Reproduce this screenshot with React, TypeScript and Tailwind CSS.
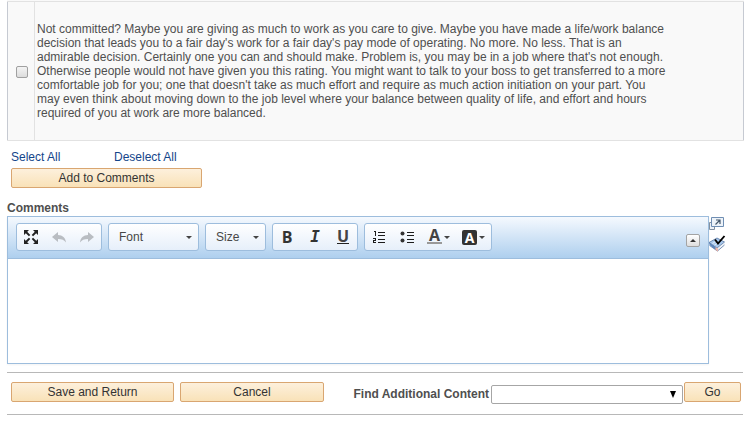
import type { ReactNode } from 'react';
import clsx from 'clsx';

const feedback = [
  'Not committed? Maybe you are giving as much to work as you care to give. Maybe you have made a life/work balance',
  "decision that leads you to a fair day's work for a fair day's pay mode of operating. No more. No less. That is an",
  "admirable decision. Certainly one you can and should make. Problem is, you may be in a job where that's not enough.",
  'Otherwise people would not have given you this rating. You might want to talk to your boss to get transferred to a more',
  "comfortable job for you; one that doesn't take as much effort and require as much action initiation on your part. You",
  'may even think about moving down to the job level where your balance between quality of life, and effort and hours',
  'required of you at work are more balanced.',
];

function ActionButton({ className, children }: { className?: string; children: ReactNode }) {
  return (
    <button
      type="button"
      className={clsx(
        'h-5 rounded-xs border border-[#d9a671] bg-linear-to-b from-[#fdf0dc] to-[#f9e2b8] text-center leading-[18px] text-[#333]',
        className,
      )}
    >
      {children}
    </button>
  );
}

function ToolGroup({ children }: { children: ReactNode }) {
  return (
    <div className="flex h-7 rounded-[3px] border border-[#9dbddd] bg-linear-to-b from-white to-[#e6effa]">
      {children}
    </div>
  );
}

function Tool({ label, wide, children }: { label: string; wide?: boolean; children: ReactNode }) {
  return (
    <button
      type="button"
      aria-label={label}
      className={clsx('flex items-center justify-center gap-0.5', wide ? 'w-[35px]' : 'w-7')}
    >
      {children}
    </button>
  );
}

function Caret() {
  return (
    <svg width="6" height="3" viewBox="0 0 6 3" fill="#444">
      <path d="M0 0h6L3 3z" />
    </svg>
  );
}

function Combo({ label, className }: { label: string; className: string }) {
  return (
    <div className={clsx('relative', className)}>
      <select
        aria-label={label}
        className="h-7 w-full appearance-none rounded-[3px] border border-[#9dbddd] bg-linear-to-b from-white to-[#e6effa] pl-2.5 text-[#474747]"
      >
        <option>{label}</option>
      </select>
      <span className="pointer-events-none absolute top-3 right-[7px] flex h-1 items-center">
        <Caret />
      </span>
    </div>
  );
}

function MaximizeIcon() {
  return (
    <svg width="14" height="14" viewBox="0 0 14 14" fill="#222" stroke="#222" strokeWidth="2">
      <path stroke="none" d="M0 0h5L0 5zM14 0v5L9 0zM0 14V9l5 5zM14 14H9l5-5z" />
      <path d="M2 2l3.600 3.600M12 2L8.400 5.600M2 12l3.600-3.600M12 12L8.400 8.400" />
    </svg>
  );
}

function UndoIcon({ flip }: { flip?: boolean }) {
  return (
    <svg width="14" height="11" viewBox="0 0 14 11" fill="#b9bdc2" className={flip ? '-scale-x-100' : undefined}>
      <path d="M0 5l6-5v3c4.500.200 7.500 2.800 8 7.500C12.300 8 9.800 7 6 7v3z" />
    </svg>
  );
}

function NumberedIcon() {
  return (
    <svg width="14" height="14" viewBox="0 0 14 14" fill="#1c1c1c" shapeRendering="crispEdges">
      <path d="M2 1h2v5H3V2H2z" />
      <path d="M1 8h3v3H2v1h2v1H1v-3h2V9H1z" />
      <path d="M6 2h7v1H6zM6 5h7v1H6zM6 9h7v1H6zM6 12h7v1H6z" />
    </svg>
  );
}

function BulletIcon() {
  return (
    <svg width="14" height="14" viewBox="0 0 14 14">
      <circle cx="2.500" cy="3.500" r="2" fill="#333" />
      <circle cx="2.500" cy="10.500" r="2" fill="#333" />
      <path fill="#1c1c1c" d="M7 2h7v1H7zM7 5h7v1H7zM7 9h7v1H7zM7 12h7v1H7z" />
    </svg>
  );
}

function PopupIcon() {
  return (
    <svg width="15" height="13" viewBox="0 0 15 13" fill="none">
      <path d="M.5 5.500h5v7h-5z" fill="#eef2f7" stroke="#8290a0" />
      <path d="M2.500.5h12v9h-12z" fill="#edf3f9" stroke="#6f8eb3" />
      <path d="M6.500 7.500l4-4M7 3h4v4" stroke="#46586b" strokeWidth="1.200" />
    </svg>
  );
}

function SpellCheckIcon() {
  return (
    <svg width="17" height="17" viewBox="0 0 17 17" fill="none">
      <path d="M0 7.500L8 3l7.500 4L8 13z" fill="#a9c8ec" />
      <path d="M0 7.500L8 13v3L.5 10z" fill="#5b86c0" />
      <path d="M8 13l7.500-6v3L8.500 16z" fill="#eef2f7" />
      <path d="M0 7.500L8 3l7.500 4L8 13zM.5 10.500L8.500 16l7-6" stroke="#5877a3" strokeWidth=".8" />
      <path d="M6.500 12l2.500 1.500v3l-2.500-1.500z" fill="#f0b5a8" />
      <path d="M3.500 8.500L8 5.500M5.500 10l3-2" stroke="#e6f0fb" />
      <path d="M6 4.500l3 4L15.500 1" stroke="#000" strokeWidth="1.900" />
    </svg>
  );
}

function Toolbar() {
  return (
    <div className="flex h-[42px] items-start gap-1.5 border-b border-[#9dbddd] bg-linear-to-b from-[#f5f9fe] to-[#aecfee] px-2 pt-1.5">
      <ToolGroup>
        <Tool label="Maximize"><MaximizeIcon /></Tool>
        <Tool label="Undo"><UndoIcon /></Tool>
        <Tool label="Redo"><UndoIcon flip /></Tool>
      </ToolGroup>
      <Combo label="Font" className="w-[91px]" />
      <Combo label="Size" className="w-[61px]" />
      <ToolGroup>
        <Tool label="Bold">
          <span className="font-['Open_Sans',sans-serif] text-base leading-5 font-bold text-[#333]">B</span>
        </Tool>
        <Tool label="Italic">
          <span className="font-['DejaVu_Sans_Mono',monospace] text-base leading-5 font-bold text-[#333] italic">I</span>
        </Tool>
        <Tool label="Underline">
          <span className="h-[14px] w-3 border-b border-[#222] font-['Open_Sans',sans-serif] text-base leading-3 font-bold text-[#444]">U</span>
        </Tool>
      </ToolGroup>
      <ToolGroup>
        <Tool label="Numbered list"><NumberedIcon /></Tool>
        <Tool label="Bulleted list"><BulletIcon /></Tool>
        <Tool label="Text color" wide>
          <span className="h-[14px] w-[15px] border-b-2 border-[#999] font-['Open_Sans',sans-serif] text-base leading-[10px] font-bold text-[#444]">A</span>
          <Caret />
        </Tool>
        <Tool label="Background color" wide>
          <span className="size-[15px] rounded-xs bg-[#333] font-['Open_Sans',sans-serif] text-sm leading-[15px] font-bold text-white">A</span>
          <Caret />
        </Tool>
      </ToolGroup>
      <button
        type="button"
        aria-label="Collapse toolbar"
        className="mt-[11px] ml-auto flex h-[13px] w-[14px] items-center justify-center rounded-xs border border-[#a3a3a3] bg-linear-to-b from-white to-[#dedede]"
      >
        <svg width="6" height="3" viewBox="0 0 6 3" fill="#333">
          <path d="M0 3h6L3 0z" />
        </svg>
      </button>
    </div>
  );
}

export default function App() {
  return (
    <main className="bg-white pr-2 pl-[7px] font-['Liberation_Sans',Arial,sans-serif] text-xs leading-[14px] text-[#4f4f4f]">
      {/* Last row of the feedback grid */}
      <div className="bg-[#f9f9f9] pt-px">
        <table className="w-full border-collapse border-x border-[#c6cad2]">
          <tbody>
            <tr className="h-[139px] border-y border-[#e2e2e2]">
              <td className="w-[27px] border-r border-[#e2e2e2] pl-0.5 text-center">
                <input
                  type="checkbox"
                  aria-label="Select this comment"
                  className="size-3 appearance-none rounded-xs border border-[#a0a0a0] bg-linear-to-b from-[#f4f4f4] to-[#dcdcdc] align-middle"
                />
              </td>
              <td className="pl-0.5 whitespace-nowrap">
                {feedback.map((line) => (
                  <div key={line}>{line}</div>
                ))}
              </td>
            </tr>
          </tbody>
        </table>
      </div>

      <div className="px-1 pt-[9px]">
        <div className="flex text-[#14458a]">
          <a href="#all" className="w-[103px]">Select All</a>
          <a href="#none">Deselect All</a>
        </div>
        <ActionButton className="mt-1 block w-[191px]">Add to Comments</ActionButton>
      </div>

      <label htmlFor="comments" className="mt-[13px] block font-bold">Comments</label>
      <div className="mt-px flex items-start">
        <div className="min-w-0 flex-1 border border-[#9dbddd] shadow-xs">
          <Toolbar />
          <textarea id="comments" className="block h-[104px] w-full resize-none bg-white p-2 outline-none" />
        </div>
        <div className="flex w-[35px] flex-col items-start gap-[5px] pt-px">
          <button type="button" aria-label="Open in new window"><PopupIcon /></button>
          <button type="button" aria-label="Check spelling"><SpellCheckIcon /></button>
        </div>
      </div>

      <div className="mt-2 mr-px flex items-start border-y border-[#b8b8b8] pt-[9px] pr-0.5 pb-2.5 pl-1">
        <ActionButton className="w-[163px]">Save and Return</ActionButton>
        <ActionButton className="ml-1.5 w-36">Cancel</ActionButton>
        <label htmlFor="content" className="mt-[5px] ml-auto pr-0.5 font-bold">Find Additional Content</label>
        <div className="relative mt-[3px] w-48">
          <select id="content" className="block h-[19px] w-full appearance-none rounded-xs border border-[#a6a6a6] bg-white">
            <option value="" />
          </select>
          <svg width="6" height="7" viewBox="0 0 6 7" className="pointer-events-none absolute top-1.5 right-[7px]">
            <path d="M0 0h6L3 7z" />
          </svg>
        </div>
        <ActionButton className="ml-px w-[57px]">Go</ActionButton>
      </div>
    </main>
  );
}
